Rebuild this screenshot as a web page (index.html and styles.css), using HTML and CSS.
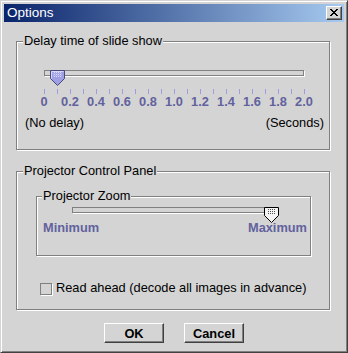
FILE: index.html
```html
<!DOCTYPE html>
<html>
<head>
<meta charset="utf-8">
<link rel="stylesheet" href="styles.css">
</head>
<body>
<div class="window">
  <div class="titlebar">
    <span class="title">Options</span>
    <div class="close">
      <svg width="8" height="7" viewBox="0 0 8 7"><path fill="#000" d="M0 0h2v1H0z M6 0h2v1H6z M1 1h2v1H1z M5 1h2v1H5z M2 2h4v1H2z M3 3h2v1H3z M2 4h4v1H2z M1 5h2v1H1z M5 5h2v1H5z M0 6h2v1H0z M6 6h2v1H6z"/></svg>
    </div>
  </div>
  <div class="content">
    <div class="group g1">
      <div class="legend">Delay time of slide show</div>
      <div class="slider s1">
        <div class="track"></div>
        <div class="thumb" style="left:6px">
          <svg width="15" height="16" viewBox="0 0 15 16">
            <defs><pattern id="dotsA" width="2" height="2" patternUnits="userSpaceOnUse"><rect x="0" y="0" width="1" height="1" fill="#dcdcff"/><rect x="1" y="1" width="1" height="1" fill="#b4b4f0"/></pattern></defs>
            <polygon points="0.5,0.5 14.5,0.5 14.5,8.5 7.5,15.5 0.5,8.5" fill="#9f9fe6" stroke="#4a4a7a"/>
            <polyline points="1.5,8.5 1.5,1.5 13.5,1.5" fill="none" stroke="#d8d8ff"/>
            <rect x="3" y="2" width="9" height="5" fill="url(#dotsA)"/>
          </svg>
        </div>
      </div>
      <div class="ticks"><i></i><i></i><i></i><i></i><i></i><i></i><i></i><i></i><i></i><i></i><i></i><i></i><i></i><i></i><i></i><i></i><i></i><i></i><i></i><i></i><i></i></div>
      <div class="scale"><span>0</span><span>0.2</span><span>0.4</span><span>0.6</span><span>0.8</span><span>1.0</span><span>1.2</span><span>1.4</span><span>1.6</span><span>1.8</span><span>2.0</span></div>
      <div class="ends"><span>(No delay)</span><span>(Seconds)</span></div>
    </div>
    <div class="group g2">
      <div class="legend">Projector Control Panel</div>
      <div class="group g3">
        <div class="legend">Projector Zoom</div>
        <div class="slider s2">
          <div class="track"></div>
          <div class="thumb" style="left:192px">
            <svg width="15" height="16" viewBox="0 0 15 16">
              <defs><pattern id="dotsB" width="2" height="2" patternUnits="userSpaceOnUse"><rect x="0" y="0" width="1" height="1" fill="#505050"/></pattern></defs>
              <polygon points="0.5,0.5 14.5,0.5 14.5,8.5 7.5,15.5 0.5,8.5" fill="#f4f4f4" stroke="#000"/>
              <rect x="3" y="2" width="9" height="5" fill="url(#dotsB)"/>
            </svg>
          </div>
        </div>
        <div class="minmax"><span>Minimum</span><span>Maximum</span></div>
      </div>
      <div class="check"><span class="box"></span><span>Read ahead (decode all images in advance)</span></div>
    </div>
    <div class="buttons"><button class="btn">OK</button><button class="btn">Cancel</button></div>
  </div>
</div>
</body>
</html>
```
FILE: styles.css
```css
html, body {
  margin: 0;
  background: #d4d4d4;
}
body {
  font-family: "Liberation Sans", sans-serif;
  font-size: 12.8px;
  line-height: 14px;
  color: #000;
}
.window {
  width: 348px;
  height: 353px;
  box-sizing: border-box;
  border: 1px solid;
  border-color: #d4d4d4 #404040 #404040 #d4d4d4;
  box-shadow: inset 1px 1px #fff, inset -1px -1px #808080;
  padding: 3px;
  background: #d4d4d4;
}
.titlebar {
  height: 18px;
  display: flex;
  align-items: center;
  justify-content: space-between;
  background: linear-gradient(to right, #0a246a, #a6caf0);
  padding: 0 2px 0 3px;
}
.title {
  color: #fff;
  font-size: 13.5px;
  line-height: 18px;
}
.close {
  width: 16px;
  height: 14px;
  box-sizing: border-box;
  border: 1px solid;
  border-color: #fff #404040 #404040 #fff;
  box-shadow: inset -1px -1px #808080;
  background: #d4d4d4;
  padding: 2px 0 0 3px;
}
.close svg, .thumb svg {
  display: block;
}
.content {
  padding-top: 19px;
}
.group {
  border: 1px solid #808080;
  box-shadow: inset 1px 1px #fff, 1px 1px #fff;
}
.g1 {
  margin: 0 14px 0 12px;
  padding-bottom: 19px;
}
.g2 {
  margin: 21px 14px 0 12px;
  padding-bottom: 14px;
}
.g3 {
  margin: 18px 18px 0 19px;
  padding-bottom: 20px;
}
.legend {
  width: fit-content;
  margin-top: -8px;
  margin-left: 6px;
  padding: 0 1px;
  background: #d4d4d4;
}
.g3 > .legend {
  margin-left: 5px;
}
.slider {
  position: relative;
  height: 16px;
}
.track {
  height: 6px;
  box-sizing: border-box;
  border: 1px solid #808080;
  box-shadow: 1px 1px #fff;
  background: #d4d4d4;
}
.s1 {
  margin: 22px 0 0 27px;
  width: 260px;
}
.s1 .track {
  margin-top: 3px;
}
.s2 {
  margin: 3px 0 0 35px;
  width: 206px;
  height: 14px;
}
.s2 .track {
  margin-top: 4px;
}
.thumb {
  position: absolute;
  top: 0;
  width: 15px;
  height: 16px;
}
.ticks {
  display: flex;
  gap: 12px;
  height: 5px;
  margin: 3px 0 0 27px;
}
.ticks i {
  width: 1px;
  background: #9c9ce0;
}
.scale {
  display: grid;
  grid-template-columns: repeat(11, 26px);
  margin: 1px 0 0 14px;
  font-weight: bold;
  color: #62629e;
  text-align: center;
}
.ends {
  display: flex;
  justify-content: space-between;
  margin-top: 7px;
  padding: 0 5px 0 8px;
}
.minmax {
  display: flex;
  justify-content: space-between;
  padding: 0 3px 0 6px;
  font-weight: bold;
  color: #62629e;
}
.check {
  display: flex;
  gap: 3px;
  margin: 25px 0 0 23px;
}
.box {
  width: 12px;
  height: 12px;
  box-sizing: border-box;
  margin: 2px 1px 0 0;
  border: 1px solid #808080;
  box-shadow: 1px 1px #fff;
  background: #d4d4d4;
}
.buttons {
  display: flex;
  justify-content: center;
  gap: 20px;
  margin-top: 13px;
}
.btn {
  width: 60px;
  height: 20px;
  box-sizing: border-box;
  padding: 0;
  border: 1px solid;
  border-color: #fff #404040 #404040 #fff;
  box-shadow: inset -1px -1px #808080;
  background: #d4d4d4;
  font-family: inherit;
  font-size: 12.8px;
  font-weight: bold;
  line-height: 17px;
  color: #000;
  text-align: center;
}
```
